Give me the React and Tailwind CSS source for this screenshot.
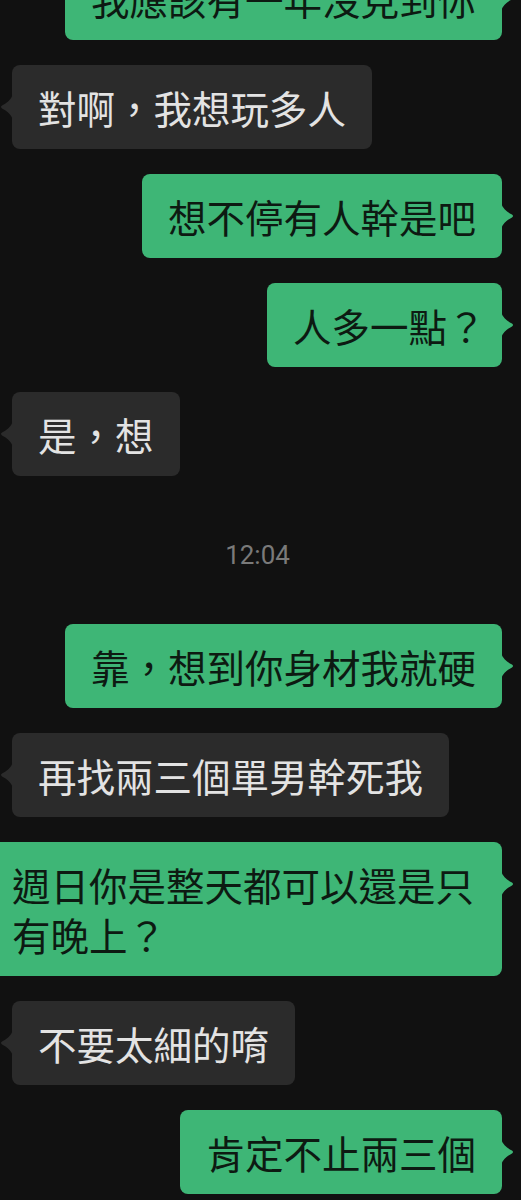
import React from 'react';

const GREEN = 'bg-[#3eb676]';
const GRAY = 'bg-[#2b2b2b]';

const Tail = ({ side, color }) => (
  <svg
    width="13"
    height="26"
    viewBox="0 0 13 26"
    className={`absolute top-[29px] ${side === 'right' ? 'right-[-12px]' : 'left-[-12px] -scale-x-100'}`}
  >
    <path d="M0 0 C2 6 6 9 11 11.6 Q13 13 11 14.4 C6 17 2 20 0 26 Z" fill={color} />
  </svg>
);

const Sent = ({ children, className = '' }) => (
  <div className="flex justify-end pr-[19px]">
    <div
      className={`relative shrink-0 ${GREEN} rounded-lg px-[26px] py-[17px] text-[38.5px] leading-[50px] text-[#0d1a12] ${className}`}
    >
      {children}
      <Tail side="right" color="#3eb676" />
    </div>
  </div>
);

const Received = ({ children }) => (
  <div className="flex justify-start pl-[12px]">
    <div
      className={`relative ${GRAY} rounded-lg px-[26px] py-[17px] text-[38.5px] leading-[50px] text-[#e3e3e3]`}
    >
      {children}
      <Tail side="left" color="#2b2b2b" />
    </div>
  </div>
);

export default function App() {
  return (
    <div
      className="w-[521px] h-[1200px] overflow-hidden bg-[#111111]"
      style={{ fontFamily: '"Noto Sans CJK TC", "Noto Sans", sans-serif' }}
    >
      <div className="flex flex-col gap-[25px] mt-[-44px]">
        <Sent>我應該有一年沒見到你</Sent>
        <Received>對啊，我想玩多人</Received>
        <Sent>想不停有人幹是吧</Sent>
        <Sent className="w-[235px] whitespace-nowrap">人多一點？</Sent>
        <Received>是，想</Received>
        <div
          className="text-center pr-[6px] text-[26px] leading-[30px] text-[#7a7a7a] mt-[39px] mb-[29px]"
          style={{ fontFamily: 'Roboto, "Noto Sans", sans-serif' }}
        >
          12:04
        </div>
        <Sent>靠，想到你身材我就硬</Sent>
        <Received>再找兩三個單男幹死我</Received>
        <Sent className="w-[516px]">週日你是整天都可以還是只有晚上？</Sent>
        <Received>不要太細的唷</Received>
        <Sent>肯定不止兩三個</Sent>
      </div>
    </div>
  );
}
